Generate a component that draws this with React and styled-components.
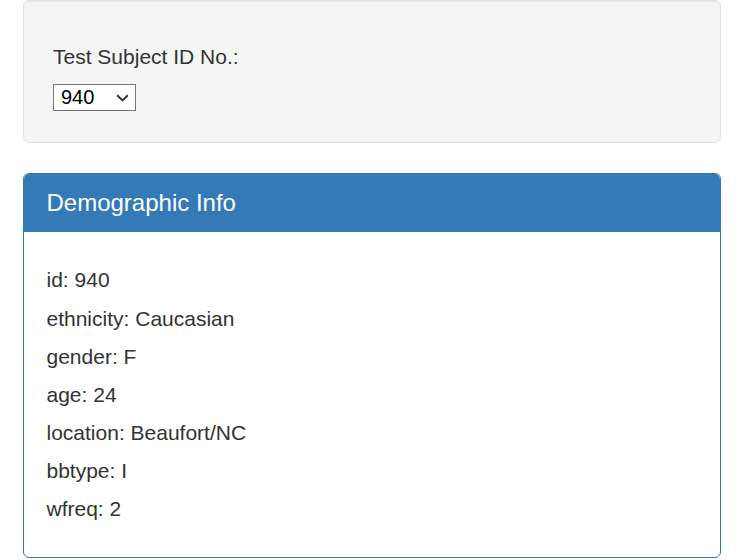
import React, { useState } from 'react';
import styled, { createGlobalStyle } from 'styled-components';

const GlobalStyle = createGlobalStyle`
  html, body {
    margin: 0;
    padding: 0;
    background: #fff;
  }
  body {
    font-family: "Liberation Sans", Arial, Helvetica, sans-serif;
    font-size: 21px;
    line-height: 1.42857;
    color: #333;
  }
  * { box-sizing: border-box; }
`;

const Page = styled.div`
  padding: 0 22px 0 23px;
`;

const Well = styled.div`
  min-height: 30px;
  padding: 29px;
  margin-bottom: 30px;
  background: #f5f5f5;
  border: 1px solid #e3e3e3;
  border-radius: 6px;
  box-shadow: inset 0 1px 1px rgba(0, 0, 0, 0.05);
`;

const Heading = styled.h5`
  font-size: 21px;
  font-weight: 500;
  line-height: 1.1;
  margin: 15px 0;
  color: inherit;
`;

const SelectWrap = styled.div`
  position: relative;
  display: inline-block;
  vertical-align: top;
  margin-top: 0.5px;
`;

const Select = styled.select`
  appearance: none;
  -webkit-appearance: none;
  display: block;
  width: 83px;
  height: 27px;
  margin: 0;
  padding: 0 0 0 7px;
  font-family: "Liberation Sans", Arial, sans-serif;
  font-size: 20px;
  color: #000;
  background: #fff;
  border: 1px solid #767676;
  border-radius: 0;
  outline: none;
`;

const Chevron = styled.svg`
  position: absolute;
  right: 7px;
  top: 10px;
  width: 13px;
  height: 8px;
  pointer-events: none;
`;

const Panel = styled.div`
  margin-bottom: 0;
  background: #fff;
  border: 1px solid #337ab7;
  border-radius: 6px;
  overflow: hidden;
`;

const PanelHeading = styled.div`
  padding: 15.5px 22.5px 15px;
  background: #337ab7;
  color: #fff;
  border-bottom: 1px solid #337ab7;
`;

const PanelTitle = styled.h3`
  margin: 0;
  font-size: 24px;
  font-weight: 500;
  line-height: 1.1;
  color: inherit;
`;

const PanelBody = styled.div`
  padding: 21.5px 22.5px 22px;
`;

const info = [
  ['id', '940'],
  ['ethnicity', 'Caucasian'],
  ['gender', 'F'],
  ['age', '24'],
  ['location', 'Beaufort/NC'],
  ['bbtype', 'I'],
  ['wfreq', '2'],
];

export default function App() {
  const [subject, setSubject] = useState('940');

  return (
    <>
      <GlobalStyle />
      <Page>
        <Well>
          <Heading>Test Subject ID No.:</Heading>
          <SelectWrap>
            <Select value={subject} onChange={(e) => setSubject(e.target.value)}>
              <option value="940">940</option>
              <option value="941">941</option>
              <option value="943">943</option>
            </Select>
            <Chevron viewBox="0 0 13 8">
              <path d="M1.2 1.2 L6.5 6.4 L11.8 1.2" fill="none" stroke="#333" strokeWidth="2" />
            </Chevron>
          </SelectWrap>
        </Well>

        <Panel>
          <PanelHeading>
            <PanelTitle>Demographic Info</PanelTitle>
          </PanelHeading>
          <PanelBody>
            {info.map(([k, v]) => (
              <Heading key={k}>
                {k}: {v}
              </Heading>
            ))}
          </PanelBody>
        </Panel>
      </Page>
    </>
  );
}
